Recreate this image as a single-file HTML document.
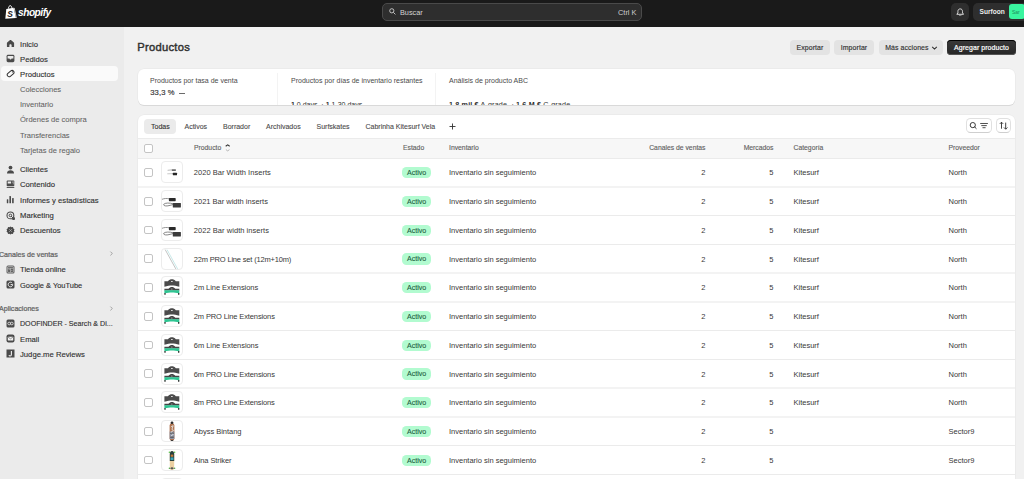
<!DOCTYPE html>
<html><head><meta charset="utf-8">
<style>
*{box-sizing:border-box;margin:0;padding:0}svg{display:block}
html,body{width:1024px;height:479px;overflow:hidden;background:#f1f1f1;font-family:"Liberation Sans",sans-serif;color:#303030}
.a{position:absolute;white-space:nowrap}
#top{position:absolute;left:0;top:0;width:1024px;height:27px;background:#1a1a1a}
#side{position:absolute;left:0;top:27px;width:124px;height:452px;background:#ebebeb}
.nv{position:absolute;left:20px;height:12px;line-height:12px;font-size:7.7px;font-weight:400;color:#303030;-webkit-text-stroke:0.12px #303030;white-space:nowrap}
.sub{font-weight:400;color:#616161;font-size:7.55px;-webkit-text-stroke:0.05px #616161}
.hd{position:absolute;left:-1px;height:12px;line-height:12px;font-size:7.1px;font-weight:400;color:#616161;-webkit-text-stroke:0.22px #616161;white-space:nowrap}
.ic{position:absolute;left:6px;width:8px;height:8px}
.chev{position:absolute;left:109px;width:5px;height:7px}
.btn{position:absolute;top:40px;height:15px;line-height:15px;border-radius:4px;background:#e3e3e3;font-size:6.95px;font-weight:400;color:#303030;-webkit-text-stroke:0.14px #303030;letter-spacing:0.08px;text-align:center;white-space:nowrap}
.card{position:absolute;background:#fff;border-radius:6px;box-shadow:0 1px 0 #d9d9d9, 0 0 0 0.5px #e6e6e6}
.tab{position:absolute;top:119px;height:14px;line-height:14px;font-size:7px;color:#4a4a4a;white-space:nowrap}
.th{position:absolute;top:142px;height:12px;line-height:12px;font-size:6.6px;color:#616161;white-space:nowrap}
.row{position:absolute;left:138px;width:877px;height:28.8px}
.cb{position:absolute;left:6px;width:8.8px;height:8.8px;border:0.9px solid #c4c4c4;border-radius:2px;background:#fff}
.thumb{position:absolute;left:23.2px;top:3.4px;width:21.5px;height:22px;border:0.7px solid #ececec;border-radius:4px;background:#fff;overflow:hidden}
.td{position:absolute;top:9.3px;height:12px;line-height:12px;font-size:7.5px;color:#383838;white-space:nowrap}
.badge{position:absolute;left:264.3px;top:9.1px;width:28.6px;height:11.2px;line-height:12.2px;border-radius:4.5px;background:#b2fbd0;color:#1d5e40;font-size:7.1px;text-align:center;-webkit-text-stroke:0.1px #1d5e40}
.num{text-align:right}
</style></head><body>
<div id="top">
  <!-- logo -->
  <svg class="a" style="left:5px;top:4.6px" width="12" height="14" viewBox="0 0 12 14">
    <path d="M1.3 3.9 L8.6 2.8 L11 13.1 L0.3 13.7 Z" fill="#fff"/>
    <path d="M3.4 3.6 C3.5 1.6 4.5 0.6 5.4 0.7 C6.3 0.8 6.8 1.9 6.9 3.1" stroke="#fff" stroke-width="1" fill="none"/>
    <path d="M8.6 2.8 L9.7 3.1 L11.8 13 L11 13.1 Z" fill="#cfcfcf"/>
    <text x="2.3" y="11.6" font-family="Liberation Sans" font-weight="700" font-style="italic" font-size="8.4" fill="#1a1a1a">S</text>
  </svg>
  <div class="a" style="left:18px;top:5.7px;height:14px;line-height:14px;font-size:10.2px;font-weight:700;font-style:italic;color:#fff;letter-spacing:-0.5px">shopify</div>
  <!-- search -->
  <div class="a" style="left:382px;top:3px;width:260px;height:18px;background:#2e2e2e;border:1px solid #4a4a4a;border-radius:5px"></div>
  <svg class="a" style="left:389px;top:8px" width="7" height="7" viewBox="0 0 7 7"><circle cx="2.8" cy="2.8" r="2.1" stroke="#cfcfcf" stroke-width="0.9" fill="none"/><path d="M4.4 4.4 L6.4 6.4" stroke="#cfcfcf" stroke-width="0.9"/></svg>
  <div class="a" style="left:400px;top:6.5px;height:12px;line-height:12px;font-size:7.3px;color:#d4d4d4">Buscar</div>
  <div class="a" style="left:618px;top:6.5px;height:12px;line-height:12px;font-size:7.4px;color:#cfcfcf">Ctrl K</div>
  <!-- bell -->
  <div class="a" style="left:951px;top:3px;width:18px;height:18px;background:#2e2e2e;border-radius:5px"></div>
  <svg class="a" style="left:956px;top:7.6px" width="8.4" height="8.6" viewBox="0 0 8.4 8.6"><path d="M4.2 0.9 C2.6 0.9 1.9 2.1 1.9 3.4 L1.9 4.9 L0.8 6.3 L7.6 6.3 L6.5 4.9 L6.5 3.4 C6.5 2.1 5.8 0.9 4.2 0.9 Z" stroke="#e3e3e3" stroke-width="0.95" fill="none" stroke-linejoin="round"/><path d="M3.1 7.5 C3.4 8.1 5 8.1 5.3 7.5" stroke="#e3e3e3" stroke-width="0.9" fill="none"/></svg>
  <!-- store -->
  <div class="a" style="left:973px;top:3px;width:60px;height:18px;background:#2e2e2e;border-radius:5px"></div>
  <div class="a" style="left:979.5px;top:6px;height:12px;line-height:12px;font-size:6.6px;font-weight:700;color:#ececec">Surfoon</div>
  <div class="a" style="left:1009px;top:4px;width:16px;height:15px;background:#3af59f;border-radius:3px"></div>
  <div class="a" style="left:1012px;top:6px;height:12px;line-height:12px;font-size:5px;color:#1f8c5a">Sar</div>
</div>

<div id="side"></div>
<div class="a" style="left:1px;top:66px;width:117px;height:15px;background:#fafafa;border-radius:4px"></div>
<div class="nv" style="top:38.5px">Inicio</div>
<div class="a" style="left:5.5px;top:39.0px;width:9px;height:9px"><svg width="9" height="9" viewBox="0 0 9 9"><path d="M4.5 1 C4.8 1 5 1.1 5.2 1.3 L7.8 3.6 C8 3.8 8.1 4 8.1 4.3 L8.1 7.4 C8.1 7.8 7.8 8.1 7.4 8.1 L5.6 8.1 L5.6 6.2 C5.6 5.6 5.1 5.2 4.5 5.2 C3.9 5.2 3.4 5.6 3.4 6.2 L3.4 8.1 L1.6 8.1 C1.2 8.1 0.9 7.8 0.9 7.4 L0.9 4.3 C0.9 4 1 3.8 1.2 3.6 L3.8 1.3 C4 1.1 4.2 1 4.5 1 Z" fill="#4a4a4a"/></svg></div>
<div class="nv" style="top:53.7px">Pedidos</div>
<div class="a" style="left:5.5px;top:54.2px;width:9px;height:9px"><svg width="9" height="9" viewBox="0 0 9 9"><rect x="0.6" y="0.8" width="7.8" height="7.4" rx="1.4" fill="#4a4a4a"/><path d="M1.6 2 L7.4 2 L7.4 4.6 L5.6 4.6 C5.4 5.3 5 5.6 4.5 5.6 C4 5.6 3.6 5.3 3.4 4.6 L1.6 4.6 Z" fill="#ebebeb"/></svg></div>
<div class="nv" style="top:68.8px">Productos</div>
<div class="a" style="left:5.5px;top:69.3px;width:9px;height:9px"><svg width="9" height="9" viewBox="0 0 9 9"><rect x="0.8" y="2.7" width="7.6" height="3.8" rx="1.9" transform="rotate(-40 4.6 4.6)" fill="none" stroke="#303030" stroke-width="1"/><circle cx="6.4" cy="2.9" r="0.55" fill="#303030"/></svg></div>
<div class="nv sub" style="top:83.8px">Colecciones</div>
<div class="nv sub" style="top:99.4px">Inventario</div>
<div class="nv sub" style="top:114.4px">Órdenes de compra</div>
<div class="nv sub" style="top:129.8px">Transferencias</div>
<div class="nv sub" style="top:144.9px">Tarjetas de regalo</div>
<div class="nv" style="top:164.4px">Clientes</div>
<div class="a" style="left:5.5px;top:164.9px;width:9px;height:9px"><svg width="9" height="9" viewBox="0 0 9 9"><circle cx="4.5" cy="2.6" r="1.9" fill="#4a4a4a"/><path d="M1 8.4 C1 6.2 2.5 5.2 4.5 5.2 C6.5 5.2 8 6.2 8 8.4 Z" fill="#4a4a4a"/></svg></div>
<div class="nv" style="top:179.4px">Contenido</div>
<div class="a" style="left:5.5px;top:179.9px;width:9px;height:9px"><svg width="9" height="9" viewBox="0 0 9 9"><rect x="0.7" y="0.6" width="7.6" height="5.6" rx="0.8" fill="#4a4a4a"/><rect x="1.7" y="1.5" width="3.4" height="2" fill="#ebebeb"/><path d="M6 2.4 L7.3 1.6 L7.3 4.4" stroke="#ebebeb" stroke-width="0.5" fill="none"/><rect x="0.7" y="7" width="7.6" height="0.9" fill="#4a4a4a"/></svg></div>
<div class="nv" style="top:194.8px">Informes y estadísticas</div>
<div class="a" style="left:5.5px;top:195.3px;width:9px;height:9px"><svg width="9" height="9" viewBox="0 0 9 9"><rect x="0.8" y="4.2" width="1.5" height="4" rx="0.5" fill="#4a4a4a"/><rect x="3.4" y="1" width="1.6" height="7.2" rx="0.5" fill="#4a4a4a"/><rect x="6.1" y="3" width="1.6" height="5.2" rx="0.5" fill="#4a4a4a"/></svg></div>
<div class="nv" style="top:210.2px">Marketing</div>
<div class="a" style="left:5.5px;top:210.7px;width:9px;height:9px"><svg width="9" height="9" viewBox="0 0 9 9"><circle cx="4.4" cy="4.4" r="3.4" fill="none" stroke="#4a4a4a" stroke-width="1.1"/><circle cx="4.4" cy="4.4" r="1.3" fill="none" stroke="#4a4a4a" stroke-width="1"/><path d="M5 5 L8.2 8.2 M6.4 8.4 L8.4 8.4 L8.4 6.4" stroke="#4a4a4a" stroke-width="1"/></svg></div>
<div class="nv" style="top:225.2px">Descuentos</div>
<div class="a" style="left:5.5px;top:225.7px;width:9px;height:9px"><svg width="9" height="9" viewBox="0 0 9 9"><path d="M4.5 0.4 L5.6 1.3 L7 1.1 L7.3 2.5 L8.5 3.3 L7.9 4.5 L8.5 5.7 L7.3 6.5 L7 7.9 L5.6 7.7 L4.5 8.6 L3.4 7.7 L2 7.9 L1.7 6.5 L0.5 5.7 L1.1 4.5 L0.5 3.3 L1.7 2.5 L2 1.1 L3.4 1.3 Z" fill="#4a4a4a"/><path d="M3.3 5.7 L5.7 3.3" stroke="#ebebeb" stroke-width="0.6"/><circle cx="3.3" cy="3.4" r="0.45" fill="#ebebeb"/><circle cx="5.7" cy="5.6" r="0.45" fill="#ebebeb"/></svg></div>
<div class="hd" style="top:248.8px">Canales de ventas</div>
<svg class="chev" style="top:250.3px" viewBox="0 0 5 7"><path d="M1.4 1.6 L3.3 3.5 L1.4 5.4" stroke="#8a8a8a" stroke-width="0.75" fill="none"/></svg>
<div class="nv" style="top:264.4px">Tienda online</div>
<div class="a" style="left:5.5px;top:264.9px;width:9px;height:9px"><svg width="9" height="9" viewBox="0 0 9 9"><rect x="0.5" y="0.5" width="8" height="8" rx="1.5" fill="#5c5c5c"/><rect x="1.6" y="1.6" width="5.8" height="5.8" rx="0.5" fill="none" stroke="#d0d0d0" stroke-width="0.6"/><path d="M1.8 3.3 L7.2 3.3 M4.5 3.3 L4.5 7.2 M2.6 4.6 L3.8 4.6 M5.2 5.4 L6.4 5.4" stroke="#d0d0d0" stroke-width="0.6" fill="none"/></svg></div>
<div class="nv" style="top:279.5px;font-size:7.45px">Google &amp; YouTube</div>
<div class="a" style="left:5.5px;top:280.0px;width:9px;height:9px"><svg width="9" height="9" viewBox="0 0 9 9"><rect x="0.5" y="0.5" width="8" height="8" rx="1.5" fill="#4a4a4a"/><path d="M6.2 3.1 C5.8 2.5 5.2 2.2 4.5 2.2 C3.2 2.2 2.2 3.2 2.2 4.5 C2.2 5.8 3.2 6.8 4.5 6.8 C5.7 6.8 6.6 6 6.7 4.6 L4.6 4.6" stroke="#f0f0f0" stroke-width="1" fill="none"/></svg></div>
<div class="hd" style="top:303.0px">Aplicaciones</div>
<svg class="chev" style="top:304.5px" viewBox="0 0 5 7"><path d="M1.4 1.6 L3.3 3.5 L1.4 5.4" stroke="#8a8a8a" stroke-width="0.75" fill="none"/></svg>
<div class="nv" style="top:318.4px;font-size:7.1px">DOOFINDER - Search &amp; Di...</div>
<div class="a" style="left:5.5px;top:318.9px;width:9px;height:9px"><svg width="9" height="9" viewBox="0 0 9 9"><rect x="0.5" y="0.5" width="8" height="8" rx="1.5" fill="#4a4a4a"/><circle cx="3.2" cy="4.5" r="1.35" fill="none" stroke="#f0f0f0" stroke-width="0.75"/><circle cx="5.8" cy="4.5" r="1.35" fill="none" stroke="#f0f0f0" stroke-width="0.75"/></svg></div>
<div class="nv" style="top:333.5px">Email</div>
<div class="a" style="left:5.5px;top:334.0px;width:9px;height:9px"><svg width="9" height="9" viewBox="0 0 9 9"><rect x="0.5" y="0.5" width="8" height="8" rx="2" fill="#4a4a4a"/><rect x="1.8" y="2.8" width="5.4" height="3.6" rx="0.5" fill="#f0f0f0"/><path d="M1.9 3 L4.5 4.8 L7.1 3" stroke="#4a4a4a" stroke-width="0.55" fill="none"/></svg></div>
<div class="nv" style="top:348.9px">Judge.me Reviews</div>
<div class="a" style="left:5.5px;top:349.4px;width:9px;height:9px"><svg width="9" height="9" viewBox="0 0 9 9"><rect x="0.5" y="0.5" width="8" height="8" fill="#4a4a4a"/><path d="M5.4 2 L5.4 5.6 C5.4 6.6 4.8 7 4.1 7 C3.5 7 3.1 6.7 2.9 6.2" stroke="#f0f0f0" stroke-width="1.1" fill="none"/></svg></div>
<div class="a" style="left:137.3px;top:39.1px;height:16px;line-height:16px;font-size:11.2px;font-weight:400;-webkit-text-stroke:0.42px #303030;color:#303030;letter-spacing:0.27px">Productos</div>
<div class="btn" style="left:790px;width:40px">Exportar</div>
<div class="btn" style="left:834px;width:40px">Importar</div>
<div class="btn" style="left:879px;width:64px;text-align:left;padding-left:6.2px">Más acciones</div>
<svg class="a" style="left:931px;top:45px" width="7" height="6" viewBox="0 0 7 6"><path d="M1.2 1.9 L3.5 4.1 L5.8 1.9" stroke="#303030" stroke-width="1.1" fill="none"/></svg>
<div class="btn" style="left:947px;width:69px;background:linear-gradient(#3a3a3a,#262626);color:#fff;-webkit-text-stroke:0.2px #fff;box-shadow:0 1px 0 #000 inset, 0 -1px 0 #555 inset">Agregar producto</div>
<div class="card" style="left:138px;top:69px;width:877px;height:36px;overflow:hidden"><div class="a" style="left:12px;top:6px;height:11px;line-height:11px;font-size:7px;color:#4a4a4a">Productos por tasa de venta</div><div class="a" style="left:12.2px;top:18.2px;height:12px;line-height:12px;font-size:7.6px;font-weight:400;-webkit-text-stroke:0.18px #3a3a3a;color:#3a3a3a;letter-spacing:0.15px">33,3 %</div><div class="a" style="left:40.8px;top:24px;width:5.8px;height:0.8px;background:#6b6b6b"></div><div class="a" style="left:139px;top:4px;width:1px;height:40px;background:#f3f3f3"></div><div class="a" style="left:153px;top:6px;height:11px;line-height:11px;font-size:7px;color:#4a4a4a">Productos por días de inventario restantes</div><div class="a" style="left:153px;top:30px;height:12px;line-height:12px;font-size:7px;color:#303030"><b>1</b> 0 days &nbsp;· <b>1</b> 1-30 days</div><div class="a" style="left:297px;top:4px;width:1px;height:40px;background:#f3f3f3"></div><div class="a" style="left:311px;top:6px;height:11px;line-height:11px;font-size:7px;color:#4a4a4a">Análisis de producto ABC</div><div class="a" style="left:311px;top:30px;height:12px;line-height:12px;font-size:7.2px;color:#303030;letter-spacing:0.15px"><b>1,8 mil €</b> A-grade &nbsp;· <b>1,6 M €</b> C-grade</div></div>
<div class="card" style="left:138px;top:115px;width:877px;height:400px;overflow:hidden">
<div class="a" style="left:6px;top:4px;width:32px;height:14.5px;background:#ebebeb;border-radius:4px"></div>
<div class="a" style="left:13px;top:5.6px;height:12px;line-height:12px;font-size:7px;color:#303030;-webkit-text-stroke:0.1px #303030">Todas</div>
<div class="a" style="left:46.5px;top:5.6px;height:12px;line-height:12px;font-size:7px;color:#4a4a4a;-webkit-text-stroke:0.1px #4a4a4a">Activos</div>
<div class="a" style="left:85px;top:5.6px;height:12px;line-height:12px;font-size:7px;color:#4a4a4a;-webkit-text-stroke:0.1px #4a4a4a">Borrador</div>
<div class="a" style="left:128px;top:5.6px;height:12px;line-height:12px;font-size:7px;color:#4a4a4a;-webkit-text-stroke:0.1px #4a4a4a">Archivados</div>
<div class="a" style="left:178.5px;top:5.6px;height:12px;line-height:12px;font-size:7px;color:#4a4a4a;-webkit-text-stroke:0.1px #4a4a4a">Surfskates</div>
<div class="a" style="left:227.5px;top:5.6px;height:12px;line-height:12px;font-size:7px;color:#4a4a4a;-webkit-text-stroke:0.1px #4a4a4a">Cabrinha Kitesurf Vela</div>
<svg class="a" style="left:311px;top:7.5px" width="7" height="7" viewBox="0 0 7 7"><path d="M3.5 0.5 L3.5 6.5 M0.5 3.5 L6.5 3.5" stroke="#303030" stroke-width="0.9"/></svg>
<div class="a" style="left:828.3px;top:3.1px;width:25.4px;height:15.3px;border:0.8px solid #e0e0e0;border-bottom-color:#cfcfcf;border-radius:4.5px"></div>
<svg class="a" style="left:828.3px;top:3.1px" width="25.4" height="15.3" viewBox="0 0 25.4 15.3"><circle cx="6.8" cy="7.1" r="2.6" stroke="#303030" stroke-width="0.95" fill="none"/><path d="M8.7 9 L10.2 10.5" stroke="#303030" stroke-width="1" stroke-linecap="round"/><path d="M14.2 5.5 L21.9 5.5 M15.3 7.6 L20.8 7.6 M16.5 9.7 L19.6 9.7" stroke="#303030" stroke-width="0.85"/></svg>
<div class="a" style="left:858.4px;top:3.1px;width:15px;height:15.3px;border:0.8px solid #e0e0e0;border-bottom-color:#cfcfcf;border-radius:4.5px"></div>
<svg class="a" style="left:858.4px;top:3.1px" width="15" height="15.3" viewBox="0 0 15 15.3"><path d="M5.5 10.7 L5.5 4.2 M3.8 5.9 L5.5 4.2 L7.2 5.9 M9.7 4.6 L9.7 11.2 M8 9.5 L9.7 11.2 L11.4 9.5" stroke="#303030" stroke-width="0.9" fill="none"/></svg>
<div class="a" style="left:0;top:22.9px;width:877px;height:21.3px;background:#f7f7f7;border-top:1px solid #ebebeb;border-bottom:1px solid #ebebeb"></div>
<div class="cb" style="top:28.5px;width:9.1px;height:9.3px"></div>
<div class="a" style="left:56px;top:27.2px;height:12px;line-height:12px;font-size:6.8px;color:#616161;-webkit-text-stroke:0.12px #616161">Producto</div>
<div class="a" style="left:265px;top:27.2px;height:12px;line-height:12px;font-size:6.8px;color:#616161;-webkit-text-stroke:0.12px #616161">Estado</div>
<div class="a" style="left:311px;top:27.2px;height:12px;line-height:12px;font-size:6.8px;color:#616161;-webkit-text-stroke:0.12px #616161">Inventario</div>
<div class="a" style="left:467.5px;width:100px;text-align:right;top:27.2px;height:12px;line-height:12px;font-size:6.8px;color:#616161;-webkit-text-stroke:0.12px #616161">Canales de ventas</div>
<div class="a" style="left:535.5px;width:100px;text-align:right;top:27.2px;height:12px;line-height:12px;font-size:6.8px;color:#616161;-webkit-text-stroke:0.12px #616161">Mercados</div>
<div class="a" style="left:655.5px;top:27.2px;height:12px;line-height:12px;font-size:6.8px;color:#616161;-webkit-text-stroke:0.12px #616161">Categoría</div>
<div class="a" style="left:810.5px;top:27.2px;height:12px;line-height:12px;font-size:6.8px;color:#616161;-webkit-text-stroke:0.12px #616161">Proveedor</div>
<svg class="a" style="left:86.6px;top:28.6px" width="5.4" height="8" viewBox="0 0 5.4 8"><path d="M0.7 2.3 L2.7 0.9 L4.7 2.3" stroke="#303030" stroke-width="1.05" fill="none"/><path d="M0.9 5.6 L2.7 6.9 L4.5 5.6" stroke="#a8a8a8" stroke-width="0.8" fill="none"/></svg>
</div>
<div class="a" style="left:138px;top:186px;width:877px;height:2px;background:#f3f3f3"></div>
<div class="a" style="left:138px;top:215px;width:877px;height:1px;background:#ebebeb"></div>
<div class="a" style="left:138px;top:244px;width:877px;height:1px;background:#ebebeb"></div>
<div class="a" style="left:138px;top:272px;width:877px;height:2px;background:#f3f3f3"></div>
<div class="a" style="left:138px;top:301px;width:877px;height:2px;background:#f3f3f3"></div>
<div class="a" style="left:138px;top:330px;width:877px;height:1px;background:#ebebeb"></div>
<div class="a" style="left:138px;top:359px;width:877px;height:1px;background:#ebebeb"></div>
<div class="a" style="left:138px;top:387px;width:877px;height:2px;background:#f3f3f3"></div>
<div class="a" style="left:138px;top:416px;width:877px;height:2px;background:#f3f3f3"></div>
<div class="a" style="left:138px;top:445px;width:877px;height:1px;background:#ebebeb"></div>
<div class="a" style="left:138px;top:474px;width:877px;height:1px;background:#ebebeb"></div>
<div class="a" style="left:138px;top:502px;width:877px;height:2px;background:#f3f3f3"></div>
<div class="row" style="top:157.95px">
<div class="cb" style="top:10px"></div>
<div class="thumb"><svg width="21" height="21" viewBox="0 0 21 21"><path d="M5.6 8.3 L9.7 7.9" stroke="#a8a8a8" stroke-width="0.8"/><rect x="9.7" y="7.2" width="4.2" height="1.8" rx="0.4" fill="#6d6d6d"/><path d="M5.3 11.8 L10.8 11.7" stroke="#b0b0b0" stroke-width="0.7"/><rect x="10.8" y="10.8" width="4.2" height="2.4" rx="0.5" fill="#262626"/></svg></div>
<div class="td" style="left:55.8px;letter-spacing:0.033px">2020 Bar Width Inserts</div>
<div class="badge">Activo</div>
<div class="td" style="left:311px">Inventario sin seguimiento</div>
<div class="td num" style="left:520px;width:47.5px">2</div>
<div class="td num" style="left:600px;width:35.5px">5</div>
<div class="td" style="left:655.5px">Kitesurf</div>
<div class="td" style="left:810.5px">North</div>
</div>
<div class="row" style="top:186.76px">
<div class="cb" style="top:10px"></div>
<div class="thumb"><svg width="21" height="21" viewBox="0 0 21 21"><path d="M-0.2 8.4 C2 7.4 5 7.2 7 7.8" stroke="#7a7a7a" stroke-width="0.8" fill="none"/><rect x="6.9" y="7.1" width="6.8" height="3.1" rx="0.6" fill="#2a2a2a"/><path d="M11 12.8 C8 11.8 3 11.6 1.6 13.4 C1.2 14.8 4 15.4 7 14.6 L11 13.6" stroke="#6a6a6a" stroke-width="0.8" fill="none"/><rect x="10.8" y="12" width="8.1" height="4.5" rx="0.5" fill="#3b3b3b"/></svg></div>
<div class="td" style="left:55.8px;letter-spacing:-0.006px">2021 Bar width inserts</div>
<div class="badge">Activo</div>
<div class="td" style="left:311px">Inventario sin seguimiento</div>
<div class="td num" style="left:520px;width:47.5px">2</div>
<div class="td num" style="left:600px;width:35.5px">5</div>
<div class="td" style="left:655.5px">Kitesurf</div>
<div class="td" style="left:810.5px">North</div>
</div>
<div class="row" style="top:215.51px">
<div class="cb" style="top:10px"></div>
<div class="thumb"><svg width="21" height="21" viewBox="0 0 21 21"><path d="M-0.2 8.4 C2 7.4 5 7.2 7 7.8" stroke="#7a7a7a" stroke-width="0.8" fill="none"/><rect x="6.9" y="7.1" width="6.8" height="3.1" rx="0.6" fill="#2a2a2a"/><path d="M11 12.8 C8 11.8 3 11.6 1.6 13.4 C1.2 14.8 4 15.4 7 14.6 L11 13.6" stroke="#6a6a6a" stroke-width="0.8" fill="none"/><rect x="10.8" y="12" width="8.1" height="4.5" rx="0.5" fill="#3b3b3b"/></svg></div>
<div class="td" style="left:55.8px;letter-spacing:0.047px">2022 Bar width inserts</div>
<div class="badge">Activo</div>
<div class="td" style="left:311px">Inventario sin seguimiento</div>
<div class="td num" style="left:520px;width:47.5px">2</div>
<div class="td num" style="left:600px;width:35.5px">5</div>
<div class="td" style="left:655.5px">Kitesurf</div>
<div class="td" style="left:810.5px">North</div>
</div>
<div class="row" style="top:244.26px">
<div class="cb" style="top:10px"></div>
<div class="thumb"><svg width="21" height="21" viewBox="0 0 21 21"><path d="M3.2 0.6 L14.7 21.5" stroke="#9c9c9c" stroke-width="0.6"/><path d="M5 0.6 L16.5 21.5" stroke="#9ad6d6" stroke-width="0.55"/></svg></div>
<div class="td" style="left:55.8px;letter-spacing:-0.177px">22m PRO Line set (12m+10m)</div>
<div class="badge">Activo</div>
<div class="td" style="left:311px">Inventario sin seguimiento</div>
<div class="td num" style="left:520px;width:47.5px">2</div>
<div class="td num" style="left:600px;width:35.5px">5</div>
<div class="td" style="left:655.5px">Kitesurf</div>
<div class="td" style="left:810.5px">North</div>
</div>
<div class="row" style="top:273.01px">
<div class="cb" style="top:10px"></div>
<div class="thumb"><svg width="21" height="21" viewBox="0 0 21 21"><path d="M2.4 4.3 L6 4.3 C7 2.6 8.5 2.2 9.9 2.2 C11.3 2.2 12.8 2.6 13.8 4.3 L17.3 4.3 L17.3 9.8 C14.5 8.8 12 8.4 9.9 8.4 C7.8 8.4 5.3 8.8 2.4 9.8 Z" fill="#4b4b4b"/><ellipse cx="9.9" cy="4.5" rx="0.9" ry="0.5" fill="#fff"/><path d="M2.4 11.8 L6.5 11.8 C7.5 10.6 8.6 10 9.9 10 C11.2 10 12.3 10.6 13.3 11.8 L17.3 11.8 L17.3 13.4 L2.4 13.4 Z" fill="#454545"/><path d="M2.4 13.2 L17.3 13.2 L17.3 16.5 C14.5 15.8 12 15.5 9.9 15.5 C7.8 15.5 5.3 15.8 2.4 16.5 Z" fill="#2ec592"/><rect x="2.4" y="16" width="1.2" height="1.8" fill="#2a2a2a"/><rect x="16.1" y="16" width="1.2" height="1.8" fill="#2a2a2a"/><ellipse cx="9.9" cy="12" rx="0.5" ry="0.6" fill="#ddd"/></svg></div>
<div class="td" style="left:55.8px;letter-spacing:-0.062px">2m Line Extensions</div>
<div class="badge">Activo</div>
<div class="td" style="left:311px">Inventario sin seguimiento</div>
<div class="td num" style="left:520px;width:47.5px">2</div>
<div class="td num" style="left:600px;width:35.5px">5</div>
<div class="td" style="left:655.5px">Kitesurf</div>
<div class="td" style="left:810.5px">North</div>
</div>
<div class="row" style="top:301.76px">
<div class="cb" style="top:10px"></div>
<div class="thumb"><svg width="21" height="21" viewBox="0 0 21 21"><path d="M2.4 4.3 L6 4.3 C7 2.6 8.5 2.2 9.9 2.2 C11.3 2.2 12.8 2.6 13.8 4.3 L17.3 4.3 L17.3 9.8 C14.5 8.8 12 8.4 9.9 8.4 C7.8 8.4 5.3 8.8 2.4 9.8 Z" fill="#4b4b4b"/><ellipse cx="9.9" cy="4.5" rx="0.9" ry="0.5" fill="#fff"/><path d="M2.4 11.8 L6.5 11.8 C7.5 10.6 8.6 10 9.9 10 C11.2 10 12.3 10.6 13.3 11.8 L17.3 11.8 L17.3 13.4 L2.4 13.4 Z" fill="#454545"/><path d="M2.4 13.2 L17.3 13.2 L17.3 16.5 C14.5 15.8 12 15.5 9.9 15.5 C7.8 15.5 5.3 15.8 2.4 16.5 Z" fill="#2ec592"/><rect x="2.4" y="16" width="1.2" height="1.8" fill="#2a2a2a"/><rect x="16.1" y="16" width="1.2" height="1.8" fill="#2a2a2a"/><ellipse cx="9.9" cy="12" rx="0.5" ry="0.6" fill="#ddd"/></svg></div>
<div class="td" style="left:55.8px;letter-spacing:-0.128px">2m PRO Line Extensions</div>
<div class="badge">Activo</div>
<div class="td" style="left:311px">Inventario sin seguimiento</div>
<div class="td num" style="left:520px;width:47.5px">2</div>
<div class="td num" style="left:600px;width:35.5px">5</div>
<div class="td" style="left:655.5px">Kitesurf</div>
<div class="td" style="left:810.5px">North</div>
</div>
<div class="row" style="top:330.51px">
<div class="cb" style="top:10px"></div>
<div class="thumb"><svg width="21" height="21" viewBox="0 0 21 21"><path d="M2.4 4.3 L6 4.3 C7 2.6 8.5 2.2 9.9 2.2 C11.3 2.2 12.8 2.6 13.8 4.3 L17.3 4.3 L17.3 9.8 C14.5 8.8 12 8.4 9.9 8.4 C7.8 8.4 5.3 8.8 2.4 9.8 Z" fill="#4b4b4b"/><ellipse cx="9.9" cy="4.5" rx="0.9" ry="0.5" fill="#fff"/><path d="M2.4 11.8 L6.5 11.8 C7.5 10.6 8.6 10 9.9 10 C11.2 10 12.3 10.6 13.3 11.8 L17.3 11.8 L17.3 13.4 L2.4 13.4 Z" fill="#454545"/><path d="M2.4 13.2 L17.3 13.2 L17.3 16.5 C14.5 15.8 12 15.5 9.9 15.5 C7.8 15.5 5.3 15.8 2.4 16.5 Z" fill="#2ec592"/><rect x="2.4" y="16" width="1.2" height="1.8" fill="#2a2a2a"/><rect x="16.1" y="16" width="1.2" height="1.8" fill="#2a2a2a"/><ellipse cx="9.9" cy="12" rx="0.5" ry="0.6" fill="#ddd"/></svg></div>
<div class="td" style="left:55.8px;letter-spacing:-0.044px">6m Line Extensions</div>
<div class="badge">Activo</div>
<div class="td" style="left:311px">Inventario sin seguimiento</div>
<div class="td num" style="left:520px;width:47.5px">2</div>
<div class="td num" style="left:600px;width:35.5px">5</div>
<div class="td" style="left:655.5px">Kitesurf</div>
<div class="td" style="left:810.5px">North</div>
</div>
<div class="row" style="top:359.26px">
<div class="cb" style="top:10px"></div>
<div class="thumb"><svg width="21" height="21" viewBox="0 0 21 21"><path d="M2.4 4.3 L6 4.3 C7 2.6 8.5 2.2 9.9 2.2 C11.3 2.2 12.8 2.6 13.8 4.3 L17.3 4.3 L17.3 9.8 C14.5 8.8 12 8.4 9.9 8.4 C7.8 8.4 5.3 8.8 2.4 9.8 Z" fill="#4b4b4b"/><ellipse cx="9.9" cy="4.5" rx="0.9" ry="0.5" fill="#fff"/><path d="M2.4 11.8 L6.5 11.8 C7.5 10.6 8.6 10 9.9 10 C11.2 10 12.3 10.6 13.3 11.8 L17.3 11.8 L17.3 13.4 L2.4 13.4 Z" fill="#454545"/><path d="M2.4 13.2 L17.3 13.2 L17.3 16.5 C14.5 15.8 12 15.5 9.9 15.5 C7.8 15.5 5.3 15.8 2.4 16.5 Z" fill="#2ec592"/><rect x="2.4" y="16" width="1.2" height="1.8" fill="#2a2a2a"/><rect x="16.1" y="16" width="1.2" height="1.8" fill="#2a2a2a"/><ellipse cx="9.9" cy="12" rx="0.5" ry="0.6" fill="#ddd"/></svg></div>
<div class="td" style="left:55.8px;letter-spacing:-0.128px">6m PRO Line Extensions</div>
<div class="badge">Activo</div>
<div class="td" style="left:311px">Inventario sin seguimiento</div>
<div class="td num" style="left:520px;width:47.5px">2</div>
<div class="td num" style="left:600px;width:35.5px">5</div>
<div class="td" style="left:655.5px">Kitesurf</div>
<div class="td" style="left:810.5px">North</div>
</div>
<div class="row" style="top:388.01px">
<div class="cb" style="top:10px"></div>
<div class="thumb"><svg width="21" height="21" viewBox="0 0 21 21"><path d="M2.4 4.3 L6 4.3 C7 2.6 8.5 2.2 9.9 2.2 C11.3 2.2 12.8 2.6 13.8 4.3 L17.3 4.3 L17.3 9.8 C14.5 8.8 12 8.4 9.9 8.4 C7.8 8.4 5.3 8.8 2.4 9.8 Z" fill="#4b4b4b"/><ellipse cx="9.9" cy="4.5" rx="0.9" ry="0.5" fill="#fff"/><path d="M2.4 11.8 L6.5 11.8 C7.5 10.6 8.6 10 9.9 10 C11.2 10 12.3 10.6 13.3 11.8 L17.3 11.8 L17.3 13.4 L2.4 13.4 Z" fill="#454545"/><path d="M2.4 13.2 L17.3 13.2 L17.3 16.5 C14.5 15.8 12 15.5 9.9 15.5 C7.8 15.5 5.3 15.8 2.4 16.5 Z" fill="#2ec592"/><rect x="2.4" y="16" width="1.2" height="1.8" fill="#2a2a2a"/><rect x="16.1" y="16" width="1.2" height="1.8" fill="#2a2a2a"/><ellipse cx="9.9" cy="12" rx="0.5" ry="0.6" fill="#ddd"/></svg></div>
<div class="td" style="left:55.8px;letter-spacing:-0.133px">8m PRO Line Extensions</div>
<div class="badge">Activo</div>
<div class="td" style="left:311px">Inventario sin seguimiento</div>
<div class="td num" style="left:520px;width:47.5px">2</div>
<div class="td num" style="left:600px;width:35.5px">5</div>
<div class="td" style="left:655.5px">Kitesurf</div>
<div class="td" style="left:810.5px">North</div>
</div>
<div class="row" style="top:416.76px">
<div class="cb" style="top:10px"></div>
<div class="thumb"><svg width="21" height="21" viewBox="0 0 21 21"><rect x="7.6" y="2.2" width="4.8" height="17.4" rx="2.2" fill="#b07552"/><rect x="7.6" y="10.5" width="4.8" height="7.5" fill="#8f93a3"/><path d="M8.8 6 L11.2 4.6 L9.9 8.4 L11.5 9.4 L8.8 11.4 L11.3 13.3 L8.9 15.2" stroke="#eef2f2" stroke-width="0.8" fill="none"/><path d="M8.2 12.2 L11.8 12.2 M8.2 16.2 L11.8 16.2" stroke="#3a3a3a" stroke-width="0.8"/><ellipse cx="10" cy="1.8" rx="1.4" ry="1.2" fill="#2a2a2a"/><ellipse cx="10" cy="20.2" rx="1.4" ry="1.2" fill="#2a2a2a"/></svg></div>
<div class="td" style="left:55.8px;letter-spacing:-0.021px">Abyss Bintang</div>
<div class="badge">Activo</div>
<div class="td" style="left:311px">Inventario sin seguimiento</div>
<div class="td num" style="left:520px;width:47.5px">2</div>
<div class="td num" style="left:600px;width:35.5px">5</div>
<div class="td" style="left:810.5px">Sector9</div>
</div>
<div class="row" style="top:445.51px">
<div class="cb" style="top:10px"></div>
<div class="thumb"><svg width="21" height="21" viewBox="0 0 21 21"><path d="M7.8 4 C7.8 2 8.9 1 10 1 C11.1 1 12.2 2 12.2 4 L12.2 15 C12.2 19 11.1 21 10 21 C8.9 21 7.8 19 7.8 15 Z" fill="#ecd0a2"/><path d="M7.8 4 C7.8 2 8.9 1 10 1 C11.1 1 12.2 2 12.2 4 L12.2 11 L7.8 11 Z" fill="#27403f"/><rect x="8.7" y="4.6" width="2.6" height="2.2" fill="#c27b3a"/><rect x="8.5" y="7.4" width="3" height="2.6" fill="#3aa6b8"/><circle cx="7.4" cy="2.2" r="0.8" fill="#58c24a"/><circle cx="12.6" cy="2.2" r="0.8" fill="#58c24a"/><circle cx="7.4" cy="18.3" r="0.8" fill="#58c24a"/><circle cx="12.6" cy="18.3" r="0.8" fill="#58c24a"/><path d="M7.4 18.3 L12.6 18.3" stroke="#555" stroke-width="0.6"/><rect x="9" y="17.4" width="2" height="1.8" fill="#555"/></svg></div>
<div class="td" style="left:55.8px;letter-spacing:-0.097px">Aina Striker</div>
<div class="badge">Activo</div>
<div class="td" style="left:311px">Inventario sin seguimiento</div>
<div class="td num" style="left:520px;width:47.5px">2</div>
<div class="td num" style="left:600px;width:35.5px">5</div>
<div class="td" style="left:810.5px">Sector9</div>
</div>
<div class="row" style="top:474.26px">
<div class="cb" style="top:10px"></div>
<div class="thumb"><svg width="21" height="21" viewBox="0 0 21 21"><rect x="9.3" y="1" width="1.6" height="3" fill="#3aa0d8"/></svg></div>
</div>
</body></html>
